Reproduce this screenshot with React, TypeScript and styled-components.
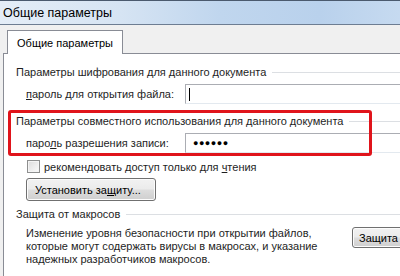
import React from 'react';
import styled, { createGlobalStyle } from 'styled-components';

const GlobalStyle = createGlobalStyle`
  html, body {
    margin: 0;
    padding: 0;
    background: #f0f0f0;
  }
  body {
    font-family: "Liberation Sans", Arial, sans-serif;
    font-size: 11px;
    color: #1e1e1e;
  }
`;

const Window = styled.div`
  width: 400px;
  height: 276px;
  overflow: hidden;
  display: flex;
  flex-direction: column;
  background: #f0f0f0;
`;

const TitleBar = styled.div`
  flex: none;
  height: 25px;
  box-sizing: border-box;
  display: flex;
  align-items: center;
  padding-left: 3px;
  border-top: 1px solid #4b5a6e;
  border-bottom: 1px solid #6d7d92;
  background: linear-gradient(90deg, #e4edf7 0%, #d6e4f3 30%, #c0d6ee 55%, #b9d1ec 80%, #c6daf0 100%);
  font-size: 12.5px;
  color: #000;
`;

const TabStrip = styled.div`
  flex: none;
  height: 28px;
  display: flex;
  align-items: flex-end;
  padding-left: 7px;
  background: #f0f0f0;
`;

const Tab = styled.div`
  height: 24px;
  width: 116px;
  box-sizing: border-box;
  display: flex;
  align-items: center;
  justify-content: center;
  background: #fff;
  border: 1px solid #898c95;
  border-bottom: none;
  margin-bottom: -1px;
  position: relative;
  z-index: 1;
  color: #000;
`;

const Panel = styled.div`
  flex: 1;
  margin-left: 3px;
  background: #fff;
  border-top: 1px solid #898c95;
  border-left: 1px solid #898c95;
  padding: 10px 0 0 12px;
  display: flex;
  flex-direction: column;
`;

const SectionHeading = styled.div`
  display: flex;
  align-items: center;
  gap: 6px;
  height: 16px;
  white-space: nowrap;

  &::after {
    content: '';
    flex: 1;
    height: 1px;
    background: #dcdfe3;
  }
`;

const FieldRow = styled.div<{ $top: number }>`
  display: flex;
  align-items: center;
  margin-top: ${({ $top }) => $top}px;
  padding-left: 10px;
`;

const Label = styled.span`
  width: 159px;
  flex: none;
  white-space: nowrap;
`;

const Input = styled.div`
  flex: 1;
  height: 20px;
  box-sizing: border-box;
  border: 1px solid #abadb3;
  border-right: none;
  border-bottom-color: #e3e9ef;
  display: flex;
  align-items: center;
  padding-left: 7px;
  font-size: 9px;
  letter-spacing: 0.5px;
  color: #000;
`;

const Caret = styled.span`
  width: 1px;
  height: 13px;
  background: #000;
  margin-left: -4px;
`;

const Shared = styled.div`
  position: relative;
  margin-top: 6px;
  padding-top: 3px;
  padding-bottom: 4px;
`;

const Highlight = styled.div`
  position: absolute;
  left: -8px;
  top: 0;
  width: 364px;
  height: 46px;
  box-sizing: border-box;
  border: 3px solid #e0141b;
  border-radius: 3px;
  pointer-events: none;
`;

const CheckRow = styled.label`
  display: flex;
  align-items: center;
  gap: 4px;
  margin-top: 3px;
  padding-left: 11px;
  height: 13px;
  white-space: nowrap;
`;

const Checkbox = styled.span`
  width: 11px;
  height: 11px;
  flex: none;
  border: 1px solid #8e8f8f;
  background: linear-gradient(135deg, #dcdcdc, #fbfbfb);
  box-shadow: inset 0 0 0 1px #f4f4f4;
`;

const Button = styled.button<{ $width: number }>`
  width: ${({ $width }) => $width}px;
  height: 23px;
  flex: none;
  box-sizing: border-box;
  border: 1px solid #707070;
  border-radius: 3px;
  background: linear-gradient(180deg, #f2f2f2 0%, #ebebeb 48%, #dddddd 52%, #cfcfcf 100%);
  box-shadow: inset 0 0 0 1px #fcfcfc;
  font: inherit;
  color: #000;
  text-align: left;
  padding: 0 0 0 8px;
  white-space: nowrap;
`;

const ProtectButton = styled(Button)`
  margin-top: 5px;
  margin-left: 10px;
  margin-bottom: 5px;
`;

const MacroRow = styled.div`
  display: flex;
  align-items: flex-start;
  gap: 10px;
  margin-top: 5px;
  padding-left: 10px;
`;

const Paragraph = styled.p`
  margin: 0;
  width: 316px;
  flex: none;
  line-height: 13px;
  white-space: nowrap;
`;

const MacroButton = styled(Button)`
  height: 21px;
  padding-left: 6px;
`;

const U = styled.span`
  text-decoration: underline;
`;

export default function App() {
  return (
    <>
      <GlobalStyle />
      <Window>
        <TitleBar>Общие параметры</TitleBar>
        <TabStrip>
          <Tab>Общие параметры</Tab>
        </TabStrip>
        <Panel>
          <SectionHeading>Параметры шифрования для данного документа</SectionHeading>
          <FieldRow $top={4}>
            <Label>
              <U>п</U>ароль для открытия файла:
            </Label>
            <Input>
              <Caret />
            </Input>
          </FieldRow>
          <Shared>
            <Highlight />
            <SectionHeading>Параметры совместного использования для данного документа</SectionHeading>
            <FieldRow $top={4}>
              <Label>
                паро<U>л</U>ь разрешения записи:
              </Label>
              <Input>●●●●●●</Input>
            </FieldRow>
          </Shared>
          <CheckRow>
            <Checkbox />
            <span>
              рекомендовать доступ только для <U>ч</U>тения
            </span>
          </CheckRow>
          <ProtectButton $width={130}>
            Установить за<U>щ</U>иту...
          </ProtectButton>
          <SectionHeading>Защита от макросов</SectionHeading>
          <MacroRow>
            <Paragraph>
              Изменение уровня безопасности при открытии файлов,
              <br />
              которые могут содержать вирусы в макросах, и указание
              <br />
              надежных разработчиков макросов.
            </Paragraph>
            <MacroButton $width={80}>Защита</MacroButton>
          </MacroRow>
        </Panel>
      </Window>
    </>
  );
}
